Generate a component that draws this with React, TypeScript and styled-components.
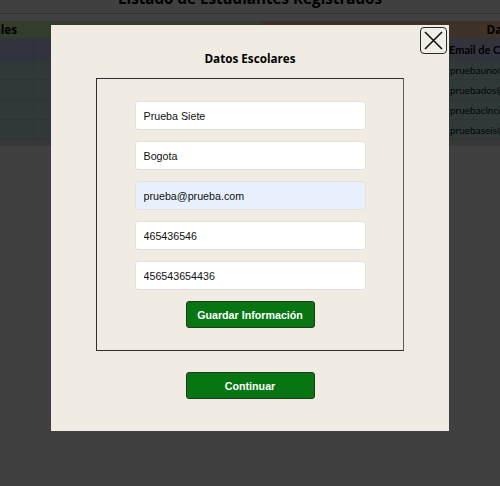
import * as React from 'react'
import styled, { createGlobalStyle } from 'styled-components'

const GlobalStyle = createGlobalStyle`
  html, body {
    margin: 0;
    background: #fff;
    overflow: hidden;
  }
  body {
    font-family: 'Open Sans', 'Liberation Sans', sans-serif;
  }
`

const Page = styled.div`
  width: 100%;
  height: 486px;
  overflow: hidden;
`

const PageTitle = styled.h2`
  margin: -12px 0 0;
  height: 25px;
  border-bottom: 1px solid #c4c4c4;
  font: bold 15.2px/20px 'Open Sans', sans-serif;
  text-align: center;
  color: #000;
`

const Table = styled.table`
  margin: 7px 0 0 -326px;
  border-collapse: collapse;
  table-layout: fixed;
  width: 1132px;
  font-family: 'Open Sans', sans-serif;
`

const GroupTh = styled.th<{ $tone: 'green' | 'brown' }>`
  height: 17px;
  padding: 0;
  font-size: 11.8px;
  line-height: 17px;
  text-align: center;
  background: ${p => (p.$tone === 'green' ? '#d0f4ac' : '#f6c6a2')};
`

const ColTh = styled.th<{ $left?: boolean }>`
  height: 22px;
  padding: 0 2px;
  border-left: 1px solid #bcbcd8;
  background: #ccccf8;
  font: bold 11px 'Lato', sans-serif;
  text-align: ${p => (p.$left ? 'left' : 'center')};
  white-space: nowrap;
  overflow: hidden;
`

const Td = styled.td<{ $left?: boolean }>`
  height: 19px;
  padding: 0 3px;
  border-left: 1px solid #c8d0d0;
  border-bottom: 1px solid #c4cccc;
  background: #bce4e4;
  font: 10px 'Lato', sans-serif;
  color: #111;
  text-align: ${p => (p.$left ? 'left' : 'center')};
  white-space: nowrap;
  overflow: hidden;
`

const TableFoot = styled.div`
  height: 6px;
  background: #e0e0e0;
`

const Overlay = styled.div`
  position: fixed;
  inset: 0;
  display: flex;
  justify-content: center;
  align-items: flex-start;
  padding-top: 25px;
  background: rgba(0, 0, 0, 0.75);
`

const Modal = styled.div`
  position: relative;
  box-sizing: border-box;
  width: 398px;
  padding: 25px 45px 32px;
  background: #f0ebe3;
  display: flex;
  flex-direction: column;
  align-items: center;
`

const CloseButton = styled.button`
  position: absolute;
  top: 2px;
  right: 2px;
  width: 27px;
  height: 27px;
  padding: 0;
  border: 1px solid #2a2a2a;
  border-radius: 4px;
  background: #f2efe9;
  display: flex;
  align-items: center;
  justify-content: center;
  cursor: pointer;
`

const ModalTitle = styled.h3`
  margin: 0;
  font: bold 11.7px/16px 'Open Sans', sans-serif;
  color: #000;
`

const Fieldset = styled.fieldset`
  box-sizing: border-box;
  width: 308px;
  margin: 12px 0 0;
  padding: 22px 37px 22px;
  border: 1px solid #2f2f2f;
  border-right-color: #5a5a5a;
  display: flex;
  flex-direction: column;
  align-items: center;
  gap: 11px;
`

const Input = styled.input<{ $filled?: boolean }>`
  box-sizing: border-box;
  width: 231px;
  height: 29px;
  padding: 0 8px;
  border: 1px solid #e4e1dc;
  border-radius: 3px;
  background: ${p => (p.$filled ? '#e8f0fe' : '#fff')};
  font: 10.7px 'Liberation Sans', Arial, sans-serif;
  color: #111;
  outline: none;
`

const GreenButton = styled.button<{ $gap?: number }>`
  box-sizing: border-box;
  width: 129px;
  height: 27px;
  margin-top: ${p => p.$gap ?? 0}px;
  border: 1px solid #1f3a1f;
  border-radius: 3px;
  background: #067512;
  color: #fff;
  font: bold 10.7px 'Liberation Sans', Arial, sans-serif;
  cursor: pointer;
`

const students = [
  { name: 'Prueba Uno', email: 'pruebauno@prueba.com' },
  { name: 'Prueba Dos', email: 'pruebados@prueba.com' },
  { name: 'Prueba Cinco', email: 'pruebacinco@prueba.com' },
  { name: 'Prueba Seis', email: 'pruebaseis@prueba.com' },
]

const App: React.FC = () => (
  <>
    <GlobalStyle />
    <Page>
      <PageTitle>Listado de Estudiantes Registrados</PageTitle>
      <Table>
        <colgroup>
          <col style={{ width: 359 }} />
          <col style={{ width: 112 }} />
          <col style={{ width: 113 }} />
          <col style={{ width: 188 }} />
          <col style={{ width: 154 }} />
          <col style={{ width: 206 }} />
        </colgroup>
        <thead>
          <tr>
            <GroupTh $tone="green" colSpan={3}>Datos Personales</GroupTh>
            <GroupTh $tone="brown" colSpan={3}>Datos Escolares</GroupTh>
          </tr>
          <tr>
            <ColTh>Nombre Completo</ColTh>
            <ColTh>Ciudad</ColTh>
            <ColTh>Teléfono</ColTh>
            <ColTh>Institución</ColTh>
            <ColTh $left>Email de Contacto</ColTh>
            <ColTh>Acciones</ColTh>
          </tr>
        </thead>
        <tbody>
          {students.map(s => (
            <tr key={s.email}>
              <Td>{s.name}</Td>
              <Td>Bogota</Td>
              <Td>3001234567</Td>
              <Td>Colegio</Td>
              <Td $left>{s.email}</Td>
              <Td>Editar</Td>
            </tr>
          ))}
        </tbody>
      </Table>
      <TableFoot />
    </Page>
    <Overlay>
      <Modal>
        <CloseButton type="button" aria-label="Cerrar">
          <svg width="19" height="19" viewBox="0 0 19 19">
            <path d="M1 1 L18 18 M18 1 L1 18" stroke="#111" strokeWidth="1.6" fill="none" />
          </svg>
        </CloseButton>
        <ModalTitle>Datos Escolares</ModalTitle>
        <Fieldset>
          <Input defaultValue="Prueba Siete" />
          <Input defaultValue="Bogota" />
          <Input $filled defaultValue="prueba@prueba.com" />
          <Input defaultValue="465436546" />
          <Input defaultValue="456543654436" />
          <GreenButton type="button" $gap={0}>Guardar Información</GreenButton>
        </Fieldset>
        <GreenButton type="button" $gap={21}>Continuar</GreenButton>
      </Modal>
    </Overlay>
  </>
)

export default App
